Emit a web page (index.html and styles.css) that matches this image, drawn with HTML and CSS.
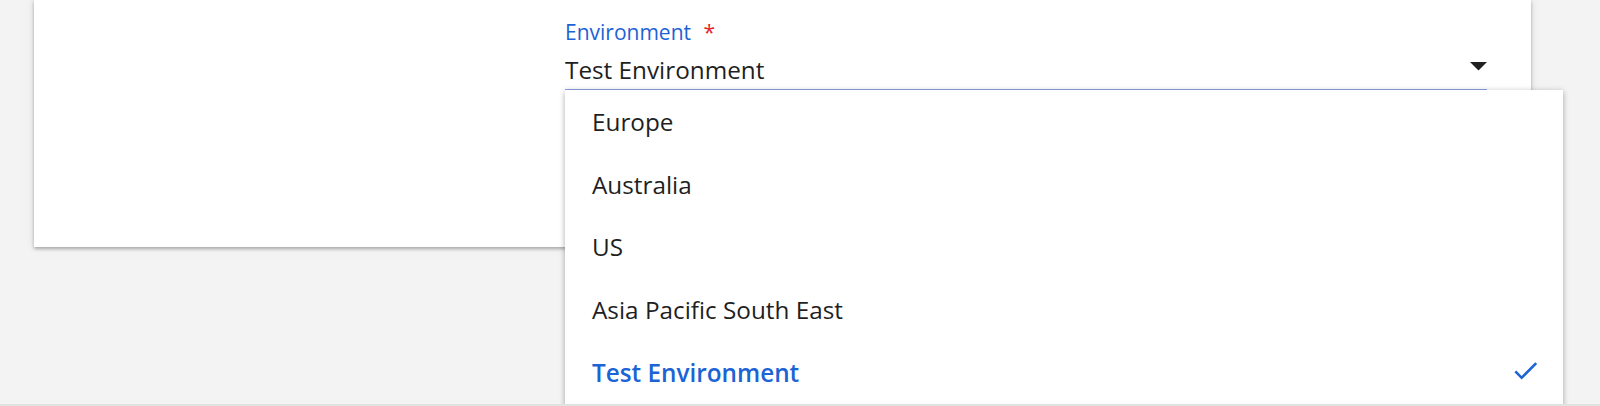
FILE: index.html
```html
<!DOCTYPE html>
<html lang="en">
<head>
<meta charset="utf-8">
<title>Environment select</title>
<link rel="stylesheet" href="styles.css">
</head>
<body>
<div class="page">
  <div class="card">
    <div class="field">
      <label class="label">Environment <span class="req">*</span></label>
      <div class="control">
        <span class="value">Test Environment</span>
        <svg class="arrow" width="17" height="9" viewBox="0 0 17 9"><polygon points="0,0 17,0 8.5,8.5" fill="#212121"/></svg>
      </div>
    </div>
  </div>
  <div class="menu">
    <div class="item">Europe</div>
    <div class="item">Australia</div>
    <div class="item">US</div>
    <div class="item">Asia Pacific South East</div>
    <div class="item selected">Test Environment
      <svg class="check" width="31" height="31" viewBox="0 0 24 24"><path d="M9 16.17L4.83 12l-1.42 1.41L9 19 21 7l-1.41-1.41z" fill="#1c63d6"/></svg>
    </div>
  </div>
  <div class="bottom-line"></div>
</div>
</body>
</html>
```
FILE: styles.css
```css
html, body {
  margin: 0;
  padding: 0;
  height: 100%;
  overflow: hidden;
}
body {
  background: #f3f3f3;
  font-family: "Open Sans", "Noto Sans", sans-serif;
  color: #1f1f1f;
}
.page {
  position: relative;
  height: 406px;
}
.card {
  margin-left: 34px;
  width: 1497px;
  height: 247px;
  background: #fff;
  box-shadow: 0 2px 3px rgba(0,0,0,0.25), 0 0 8px rgba(0,0,0,0.12);
}
.field {
  margin-left: 531px;
  width: 922px;
  padding-top: 18.5px;
}
.label {
  display: block;
  font-size: 21px;
  line-height: 26px;
  color: #1c63d6;
}
.req {
  color: #e3262b;
  margin-left: 7px;
}
.control {
  display: flex;
  align-items: flex-start;
  justify-content: space-between;
  height: 45.5px;
  border-bottom: 1px solid #8fa0e6;
  box-sizing: border-box;
}
.value {
  font-size: 24.3px;
  line-height: 32px;
  padding-top: 9.5px;
}
.arrow {
  display: block;
  margin-top: 17.5px;
}
.menu {
  position: absolute;
  left: 565px;
  top: 90px;
  width: 998px;
  height: 330px;
  box-sizing: border-box;
  background: #fff;
  box-shadow: 0 3px 6px rgba(0,0,0,0.2), 0 0 6px rgba(0,0,0,0.14);
}
.item {
  position: relative;
  display: flex;
  align-items: center;
  height: 62.75px;
  padding-left: 27px;
  font-size: 24.3px;
}
.item.selected {
  color: #1c63d6;
  font-weight: 600;
}
.check {
  position: absolute;
  left: 944.6px;
  top: 14.1px;
}
.bottom-line {
  position: absolute;
  left: 0;
  right: 0;
  bottom: 0;
  height: 2px;
  background: #e2e2e2;
}
```
